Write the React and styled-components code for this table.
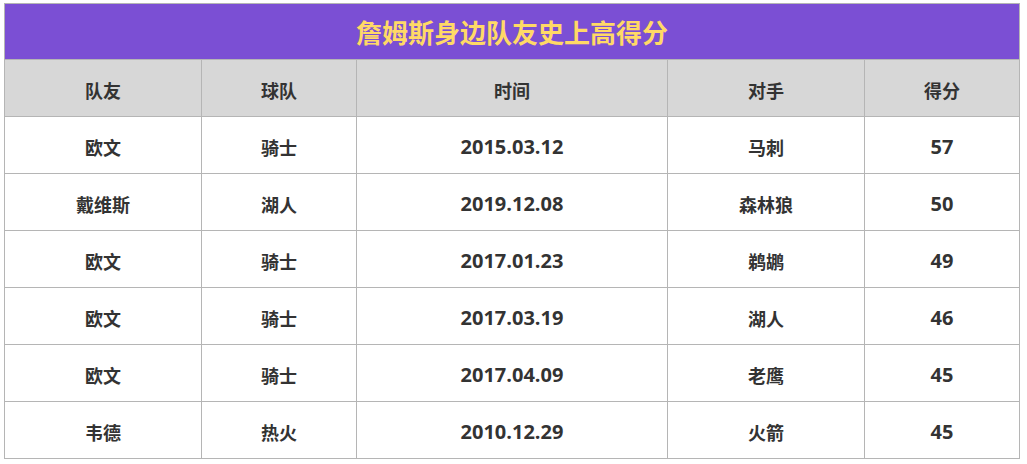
import React from "react";
import styled, { createGlobalStyle } from "styled-components";

const GlobalStyle = createGlobalStyle`
  html, body {
    margin: 0;
    padding: 0;
    background: #ffffff;
  }
  body {
    font-family: "Open Sans", "Noto Sans CJK SC", sans-serif;
  }
`;

const Page = styled.div`
  padding: 3px 0 0 4px;
`;

const Board = styled.div`
  width: 1014px;
  border: 1px solid #b5b5b5;
  background: #b5b5b5;
  display: flex;
  flex-direction: column;
  gap: 1px;
`;

const Title = styled.div`
  height: 55px;
  background: #7b4fd4;
  display: flex;
  align-items: center;
  justify-content: center;
  color: #ffd966;
  font-family: "Noto Sans CJK SC", sans-serif;
  font-weight: 700;
  font-size: 26px;
`;

const Row = styled.div`
  display: grid;
  grid-template-columns: 196px 154px 310px 196px 154px;
  column-gap: 1px;
  height: 56px;
`;

const Cell = styled.div`
  background: ${(p) => (p.$head ? "#d7d7d7" : "#ffffff")};
  display: flex;
  align-items: center;
  justify-content: center;
  padding-top: 3px;
  color: #333333;
  font-family: "Open Sans", "Noto Sans CJK SC", sans-serif;
  font-weight: 700;
  font-size: ${(p) => (p.$num ? "20px" : "18px")};
`;

const header = ["队友", "球队", "时间", "对手", "得分"];

const rows = [
  ["欧文", "骑士", "2015.03.12", "马刺", "57"],
  ["戴维斯", "湖人", "2019.12.08", "森林狼", "50"],
  ["欧文", "骑士", "2017.01.23", "鹈鹕", "49"],
  ["欧文", "骑士", "2017.03.19", "湖人", "46"],
  ["欧文", "骑士", "2017.04.09", "老鹰", "45"],
  ["韦德", "热火", "2010.12.29", "火箭", "45"],
];

export default function App() {
  return (
    <>
      <GlobalStyle />
      <Page>
        <Board>
          <Title>詹姆斯身边队友史上高得分</Title>
          <Row>
            {header.map((h) => (
              <Cell $head key={h}>
                {h}
              </Cell>
            ))}
          </Row>
          {rows.map((r, i) => (
            <Row key={i}>
              {r.map((c, j) => (
                <Cell key={j} $num={/^\d/.test(c)}>
                  {c}
                </Cell>
              ))}
            </Row>
          ))}
        </Board>
      </Page>
    </>
  );
}
